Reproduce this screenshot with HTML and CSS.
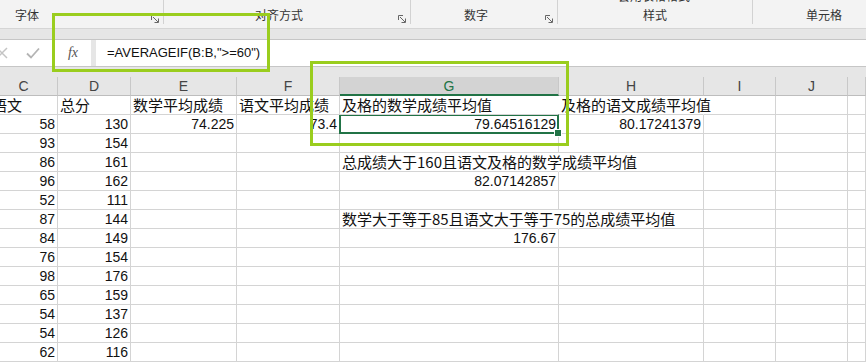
FILE: index.html
```html
<!DOCTYPE html>
<html>
	<head>
		<meta charset="utf-8">
		<link rel="stylesheet" href="styles.css">
		<script>
			var cols = ['C', 'D', 'E', 'F', 'G', 'H', 'I', 'J', ''];
			var rows = [
				['语文', '总分', '数学平均成绩', '语文平均成绩', '及格的数学成绩平均值', '及格的语文成绩平均值'],
				['58', '130', '74.225', '73.4', '79.64516129', '80.17241379'],
				['93', '154'],
				['86', '161', '', '', '总成绩大于160且语文及格的数学成绩平均值'],
				['96', '162', '', '', '82.07142857'],
				['52', '111'],
				['87', '144', '', '', '数学大于等于85且语文大于等于75的总成绩平均值'],
				['84', '149', '', '', '176.67'],
				['76', '154'],
				['98', '176'],
				['65', '159'],
				['54', '137'],
				['54', '126'],
				['62', '116']
			];
			function drawSheet() {
				var stringy = "";
				for (var c = 0; c < cols.length; c++) {
					var cls = cols[c] === 'G' ? 'head active' : 'head';
					stringy += `<div class="${cls}">${cols[c]}</div>`;
				}
				for (var r = 0; r < rows.length; r++) {
					for (var c = 0; c < cols.length; c++) {
						var v = rows[r][c] || '';
						var cls = 'cell';
						if (v !== '') {
							cls += isNaN(v) ? ' txt' : ' num';
						}
						// text that runs over into the empty neighbour hides the grid line
						if (v !== '' && isNaN(v) && v.length > 8) {
							cls += ' spill';
						}
						if (r === 1 && cols[c] === 'G') {
							cls += ' sel';
						}
						stringy += `<div class="${cls}">${v}</div>`;
					}
				}
				document.querySelector(".grid").innerHTML = stringy;
			}
		</script>
	</head>
	<body onload="drawSheet()">
		<div id="page">
			<div class="ribbon">
				<div class="group g1">
					<span class="label">字体</span>
					<svg class="launcher" width="8" height="8" viewBox="0 0 8 8"><path d="M0.5 5V0.5H5M2 2L7 7M7.5 3.5V7.5H3.5" fill="none" stroke="#666" stroke-width="1"/></svg>
				</div>
				<div class="group g2">
					<span class="label">对齐方式</span>
					<svg class="launcher" width="8" height="8" viewBox="0 0 8 8"><path d="M0.5 5V0.5H5M2 2L7 7M7.5 3.5V7.5H3.5" fill="none" stroke="#666" stroke-width="1"/></svg>
				</div>
				<div class="group g3">
					<span class="label">数字</span>
					<svg class="launcher" width="8" height="8" viewBox="0 0 8 8"><path d="M0.5 5V0.5H5M2 2L7 7M7.5 3.5V7.5H3.5" fill="none" stroke="#666" stroke-width="1"/></svg>
				</div>
				<div class="group g4">
					<span class="cutoff">套用表格格式</span>
					<span class="label">样式</span>
				</div>
				<div class="group g5">
					<span class="label">单元格</span>
				</div>
			</div>
			<div class="strip"></div>
			<div class="fbar">
				<div class="fbtns">
					<svg width="12" height="12" viewBox="0 0 12 12" class="cancel"><path d="M1 1L11 11M11 1L1 11" stroke="#c4c4c4" stroke-width="1.5"/></svg>
					<svg width="14" height="12" viewBox="0 0 14 12" class="enter"><path d="M1 6.5L5 10.5L13 1.5" fill="none" stroke="#b4b4b4" stroke-width="1.8"/></svg>
				</div>
				<div class="fx">fx</div>
				<div class="finput">=AVERAGEIF(B:B,"&gt;=60")</div>
			</div>
			<div class="strip low"></div>
			<div class="grid"></div>
			<div class="mark m1"></div>
			<div class="mark m2"></div>
		</div>
	</body>
</html>
```

FILE: styles.css
```css
body {
	margin: 0;
	background-color: #ffffff;
	font-family: "Liberation Sans", "Noto Sans CJK SC", sans-serif;
	overflow: hidden;
}
#page {
	position: relative;
	width: 866px;
	height: 363px;
	overflow: hidden;
}
.ribbon {
	display: flex;
	height: 28px;
	background-color: #f3f3f3;
	border-bottom: 1px solid #d5d5d5;
}
.group {
	position: relative;
	display: flex;
	align-items: flex-end;
	justify-content: center;
	height: 24px;
	border-right: 1px solid #d2d2d2;
	box-sizing: border-box;
}
.label {
	font-family: "Noto Sans CJK SC", sans-serif;
	font-size: 12px;
	line-height: 18px;
	color: #333;
}
.launcher {
	position: absolute;
	right: 4px;
	bottom: 1px;
}
.g1 {
	width: 164px;
	justify-content: flex-start;
	padding-left: 15px;
}
.g2 {
	width: 247px;
	padding-right: 16px;
}
.g3 {
	width: 147px;
	padding-right: 16px;
}
.g4 {
	width: 195px;
}
.g5 {
	flex: 1;
	border-right: none;
	justify-content: flex-start;
	padding-left: 53px;
}
.cutoff {
	position: absolute;
	top: -13px;
	left: 60px;
	font-family: "Noto Sans CJK SC", sans-serif;
	font-size: 12px;
	color: #333;
}
.strip {
	height: 10px;
	background-color: #e6e6e6;
}
.strip.low {
	height: 10px;
}
.fbar {
	display: flex;
	gap: 3px;
	height: 26px;
	background-color: #e6e6e6;
	border-top: 1px solid #c6c6c6;
	border-bottom: 1px solid #c6c6c6;
}
.fbtns {
	display: flex;
	align-items: center;
	width: 52px;
	background-color: #ffffff;
}
.cancel {
	margin-left: -4px;
}
.enter {
	margin-left: 18px;
}
.fx {
	width: 36px;
	background-color: #ffffff;
	text-align: center;
	font-family: "Liberation Serif", serif;
	font-style: italic;
	font-size: 14px;
	line-height: 26px;
	color: #555;
}
.finput {
	flex: 1;
	margin-left: 2px;
	padding-left: 11px;
	background-color: #ffffff;
	font-size: 13px;
	line-height: 26px;
	color: #111;
}
.grid {
	display: grid;
	grid-template-columns: 68px 73px 106px 103px 219px 145px 72px 72px 1fr;
	grid-auto-rows: 19px;
	margin-left: -10px;
	background-color: #ffffff;
}
.head {
	height: 19px;
	box-sizing: border-box;
	background-color: #e6e6e6;
	border-right: 1px solid #c8c8c8;
	border-bottom: 1px solid #bdbdbd;
	text-align: center;
	font-size: 14px;
	line-height: 18px;
	color: #444;
}
.head.active {
	background-color: #d3d3d3;
	border-bottom: 2px solid #217346;
	color: #217346;
}
.cell {
	position: relative;
	box-sizing: border-box;
	border-right: 1px solid #d4d4d4;
	border-bottom: 1px solid #d4d4d4;
	padding: 0 2px;
	white-space: nowrap;
	font-size: 14px;
	line-height: 19px;
	color: #111;
}
.num {
	text-align: right;
}
.txt {
	font-family: "Noto Sans CJK SC", sans-serif;
	font-size: 15px;
	line-height: 18px;
	z-index: 1;
}
.spill {
	border-right-color: transparent;
}
.sel::after {
	content: "";
	position: absolute;
	left: -1px;
	top: -1px;
	right: -1px;
	bottom: -1px;
	border: 2px solid #217346;
}
.sel::before {
	content: "";
	position: absolute;
	right: -4px;
	bottom: -4px;
	width: 6px;
	height: 6px;
	background-color: #217346;
	border: 1px solid #ffffff;
	z-index: 2;
}
.mark {
	position: absolute;
	border: 3px solid #9acd1e;
	z-index: 5;
}
.m1 {
	left: 52px;
	top: 13px;
	width: 212px;
	height: 53px;
}
.m2 {
	left: 310px;
	top: 61px;
	width: 253px;
	height: 79px;
}
```
